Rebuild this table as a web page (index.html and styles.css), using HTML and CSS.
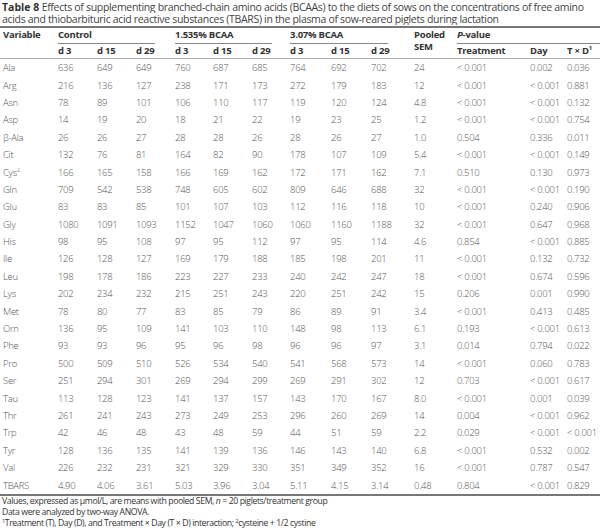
FILE: index.html
```html
<!DOCTYPE html>
<html>
<head>
<meta charset="utf-8">
<link rel="stylesheet" href="styles.css">
</head>
<body>
<div class="page">
  <div class="caption">
    <div class="cap-line"><b class="tag">Table 8</b> Effects of supplementing branched-chain amino acids (BCAAs) to the diets of sows on the concentrations of free amino</div>
    <div class="cap-line">acids and thiobarbituric acid reactive substances (TBARS) in the plasma of sow-reared piglets during lactation</div>
  </div>
  <table class="tbl">
    <colgroup>
      <col class="c-var"><col class="c39"><col class="c39"><col class="c39"><col class="c38"><col class="c39"><col class="c38"><col class="c41"><col class="c40"><col class="c43"><col class="c43"><col class="c73"><col class="c37"><col class="c33">
    </colgroup>
    <thead>
      <tr class="h1">
        <th rowspan="2" class="span2 first">Variable</th>
        <th colspan="3"><div class="grp g1">Control</div></th>
        <th colspan="3"><div class="grp g2">1.535% BCAA</div></th>
        <th colspan="3"><div class="grp g3">3.07% BCAA</div></th>
        <th rowspan="2" class="span2">Pooled<br>SEM</th>
        <th colspan="3"><div class="grp g4"><i>P</i>-value</div></th>
        <th></th>
      </tr>
      <tr class="h2">
        <th>d 3</th><th>d 15</th><th>d 29</th>
        <th>d 3</th><th>d 15</th><th>d 29</th>
        <th>d 3</th><th>d 15</th><th>d 29</th>
        <th>Treatment</th><th>Day</th><th>T × D<sup>1</sup></th><th></th>
      </tr>
    </thead>
    <tbody>
      <tr><td>Ala</td><td>636</td><td>649</td><td>649</td><td>760</td><td>687</td><td>685</td><td>764</td><td>692</td><td>702</td><td>24</td><td>&lt; 0.001</td><td>0.002</td><td>0.036</td></tr>
      <tr><td>Arg</td><td>216</td><td>136</td><td>127</td><td>238</td><td>171</td><td>173</td><td>272</td><td>179</td><td>183</td><td>12</td><td>&lt; 0.001</td><td>&lt; 0.001</td><td>0.881</td></tr>
      <tr><td>Asn</td><td>78</td><td>89</td><td>101</td><td>106</td><td>110</td><td>117</td><td>119</td><td>120</td><td>124</td><td>4.8</td><td>&lt; 0.001</td><td>&lt; 0.001</td><td>0.132</td></tr>
      <tr><td>Asp</td><td>14</td><td>19</td><td>20</td><td>18</td><td>21</td><td>22</td><td>19</td><td>23</td><td>25</td><td>1.2</td><td>&lt; 0.001</td><td>&lt; 0.001</td><td>0.754</td></tr>
      <tr><td>β-Ala</td><td>26</td><td>26</td><td>27</td><td>28</td><td>28</td><td>26</td><td>28</td><td>26</td><td>27</td><td>1.0</td><td>0.504</td><td>0.336</td><td>0.011</td></tr>
      <tr><td>Cit</td><td>132</td><td>76</td><td>81</td><td>164</td><td>82</td><td>90</td><td>178</td><td>107</td><td>109</td><td>5.4</td><td>&lt; 0.001</td><td>&lt; 0.001</td><td>0.149</td></tr>
      <tr><td>Cys<sup>2</sup></td><td>166</td><td>165</td><td>158</td><td>166</td><td>169</td><td>162</td><td>172</td><td>171</td><td>162</td><td>7.1</td><td>0.510</td><td>0.130</td><td>0.973</td></tr>
      <tr><td>Gln</td><td>709</td><td>542</td><td>538</td><td>748</td><td>605</td><td>602</td><td>809</td><td>646</td><td>688</td><td>32</td><td>&lt; 0.001</td><td>&lt; 0.001</td><td>0.190</td></tr>
      <tr><td>Glu</td><td>83</td><td>83</td><td>85</td><td>101</td><td>107</td><td>103</td><td>112</td><td>116</td><td>118</td><td>10</td><td>&lt; 0.001</td><td>0.240</td><td>0.906</td></tr>
      <tr><td>Gly</td><td>1080</td><td>1091</td><td>1093</td><td>1152</td><td>1047</td><td>1060</td><td>1060</td><td>1160</td><td>1188</td><td>32</td><td>&lt; 0.001</td><td>0.647</td><td>0.968</td></tr>
      <tr><td>His</td><td>98</td><td>95</td><td>108</td><td>97</td><td>95</td><td>112</td><td>97</td><td>95</td><td>114</td><td>4.6</td><td>0.854</td><td>&lt; 0.001</td><td>0.885</td></tr>
      <tr><td>Ile</td><td>126</td><td>128</td><td>127</td><td>169</td><td>179</td><td>188</td><td>185</td><td>198</td><td>201</td><td>11</td><td>&lt; 0.001</td><td>0.132</td><td>0.732</td></tr>
      <tr><td>Leu</td><td>198</td><td>178</td><td>186</td><td>223</td><td>227</td><td>233</td><td>240</td><td>242</td><td>247</td><td>18</td><td>&lt; 0.001</td><td>0.674</td><td>0.596</td></tr>
      <tr><td>Lys</td><td>202</td><td>234</td><td>232</td><td>215</td><td>251</td><td>243</td><td>220</td><td>251</td><td>242</td><td>15</td><td>0.206</td><td>0.001</td><td>0.990</td></tr>
      <tr><td>Met</td><td>78</td><td>80</td><td>77</td><td>83</td><td>85</td><td>79</td><td>86</td><td>89</td><td>91</td><td>3.4</td><td>&lt; 0.001</td><td>0.413</td><td>0.485</td></tr>
      <tr><td>Orn</td><td>136</td><td>95</td><td>109</td><td>141</td><td>103</td><td>110</td><td>148</td><td>98</td><td>113</td><td>6.1</td><td>0.193</td><td>&lt; 0.001</td><td>0.613</td></tr>
      <tr><td>Phe</td><td>93</td><td>93</td><td>96</td><td>95</td><td>96</td><td>98</td><td>96</td><td>96</td><td>97</td><td>3.1</td><td>0.014</td><td>0.794</td><td>0.022</td></tr>
      <tr><td>Pro</td><td>500</td><td>509</td><td>510</td><td>526</td><td>534</td><td>540</td><td>541</td><td>568</td><td>573</td><td>14</td><td>&lt; 0.001</td><td>0.060</td><td>0.783</td></tr>
      <tr><td>Ser</td><td>251</td><td>294</td><td>301</td><td>269</td><td>294</td><td>299</td><td>269</td><td>291</td><td>302</td><td>12</td><td>0.703</td><td>&lt; 0.001</td><td>0.617</td></tr>
      <tr><td>Tau</td><td>113</td><td>128</td><td>123</td><td>141</td><td>137</td><td>157</td><td>143</td><td>170</td><td>167</td><td>8.0</td><td>&lt; 0.001</td><td>0.001</td><td>0.039</td></tr>
      <tr><td>Thr</td><td>261</td><td>241</td><td>243</td><td>273</td><td>249</td><td>253</td><td>296</td><td>260</td><td>269</td><td>14</td><td>0.004</td><td>&lt; 0.001</td><td>0.962</td></tr>
      <tr><td>Trp</td><td>42</td><td>46</td><td>48</td><td>43</td><td>48</td><td>59</td><td>44</td><td>51</td><td>59</td><td>2.2</td><td>0.029</td><td>&lt; 0.001</td><td>&lt; 0.001</td></tr>
      <tr><td>Tyr</td><td>128</td><td>136</td><td>135</td><td>141</td><td>139</td><td>136</td><td>146</td><td>143</td><td>140</td><td>6.8</td><td>&lt; 0.001</td><td>0.532</td><td>0.002</td></tr>
      <tr><td>Val</td><td>226</td><td>232</td><td>231</td><td>321</td><td>329</td><td>330</td><td>351</td><td>349</td><td>352</td><td>16</td><td>&lt; 0.001</td><td>0.787</td><td>0.547</td></tr>
      <tr><td>TBARS</td><td>4.90</td><td>4.06</td><td>3.61</td><td>5.03</td><td>3.96</td><td>3.04</td><td>5.11</td><td>4.15</td><td>3.14</td><td>0.48</td><td>0.804</td><td>&lt; 0.001</td><td>0.829</td></tr>
    </tbody>
  </table>
  <div class="notes">
    <p>Values, expressed as μmol/L, are means with pooled SEM, <i>n</i> = 20 piglets/treatment group</p>
    <p>Data were analyzed by two-way ANOVA.</p>
    <p><sup>1</sup>Treatment (T), Day (D), and Treatment × Day (T × D) interaction; <sup>2</sup>cysteine + 1/2 cystine</p>
  </div>
</div>
</body>
</html>
```
FILE: styles.css
```css
html, body {
  margin: 0;
  padding: 0;
  background: #fff;
}
body {
  font-family: "Open Sans", "DejaVu Sans", sans-serif;
  color: #555;
}
.page {
  width: 600px;
}
.caption {
  margin: 1px 0 1px 0;
  padding-left: 2px;
  font-size: 10.5px;
  line-height: 12px;
  color: #444;
  letter-spacing: -0.32px;
  height: 24px;
}
.cap-line {
  white-space: nowrap;
  overflow: hidden;
}
.caption .tag {
  font-weight: 700;
  color: #333;
  letter-spacing: 0;
}
.tbl {
  width: 600px;
  table-layout: fixed;
  border-collapse: collapse;
  border-top: 2px solid #777;
  border-bottom: 2px solid #777;
}
.c-var { width: 58px; }
.c33 { width: 33px; }
.c37 { width: 37px; }
.c38 { width: 38px; }
.c39 { width: 39px; }
.c40 { width: 40px; }
.c41 { width: 41px; }
.c43 { width: 43px; }
.c73 { width: 73px; }
.tbl th {
  padding: 0;
  text-align: left;
  font-weight: 700;
  font-size: 9.5px;
  letter-spacing: -0.25px;
  color: #333;
  white-space: nowrap;
}
.h1 { height: 16px; }
.h1 th { vertical-align: top; }
.grp {
  box-sizing: border-box;
  height: 16px;
  line-height: 13px;
  border-bottom: 1px solid #888;
}
.g1 { margin-right: 20px; }
.g2 { margin-right: 18px; }
.g3 { margin-right: 26px; }
.g4 { margin-right: 0; }
.span2 {
  line-height: 12px;
  padding-top: 1px !important;
  border-bottom: 1px solid #aaa;
}
.first { padding-left: 3px !important; }
.h2 { height: 14px; }
.h2 th {
  line-height: 14px;
  border-bottom: 1px solid #aaa;
  vertical-align: middle;
}
.tbl sup {
  font-size: 6px;
  line-height: 0;
  vertical-align: 4px;
}
.tbl td {
  padding: 0;
  height: 17.4px;
  line-height: 17px;
  font-size: 9.5px;
  letter-spacing: -0.3px;
  font-weight: 300;
  color: #555;
  white-space: nowrap;
  vertical-align: middle;
}
.tbl td:first-child { padding-left: 3px; }
.notes {
  margin-top: 0;
  padding-left: 2px;
  font-size: 8.7px;
  letter-spacing: -0.4px;
  line-height: 11px;
  color: #333;
}
.notes p { margin: 0; }
.notes sup {
  font-size: 5.5px;
  line-height: 0;
  vertical-align: 3px;
}
```
